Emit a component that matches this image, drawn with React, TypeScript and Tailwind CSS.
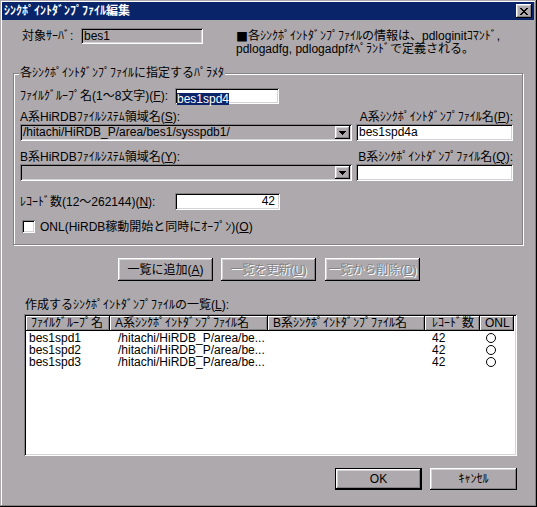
import React from "react";

const SUNKEN =
  "shadow-[inset_1px_1px_0_#848284,inset_-1px_-1px_0_#ffffff,inset_2px_2px_0_#000000,inset_-2px_-2px_0_#d6d3d6]";
const RAISED =
  "shadow-[inset_-1px_-1px_0_#000000,inset_1px_1px_0_#ffffff,inset_-2px_-2px_0_#848284,inset_2px_2px_0_#d6d3d6]";
const HEADER =
  "shadow-[inset_-1px_-1px_0_#000000,inset_1px_1px_0_#ffffff,inset_-2px_-2px_0_#848284]";

function Arrow() {
  return (
    <svg width="7" height="4" viewBox="0 0 7 4" shapeRendering="crispEdges">
      <path d="M0 0h7v1h-1v1h-1v1h-1v1h-1v-1h-1v-1h-1v-1h-1z" fill="#000" />
    </svg>
  );
}

function Combo({ value }: { value: string }) {
  return (
    <div className={`flex h-[17px] w-[332px] p-[2px] bg-[#ada9ad] ${SUNKEN}`}>
      <div className="flex-1 pl-[1px] leading-[13px] overflow-hidden whitespace-nowrap">{value}</div>
      <div className={`w-[15px] h-[13px] flex items-center justify-center bg-[#ada9ad] ${RAISED}`}>
        <Arrow />
      </div>
    </div>
  );
}

function Btn({ children, w, disabled }: { children: React.ReactNode; w: string; disabled?: boolean }) {
  return (
    <div
      className={`${w} h-[23px] flex items-center justify-center bg-[#ada9ad] ${RAISED} ${
        disabled ? "text-[#848284] [text-shadow:1px_1px_0_#ffffff]" : "text-black"
      }`}
    >
      {children}
    </div>
  );
}

const rows = ["bes1spd1", "bes1spd2", "bes1spd3"];

export default function App() {
  return (
    <div className="w-[537px] h-[507px] bg-[#ada9ad] flex flex-col text-[12px] text-black font-['Liberation_Sans','Noto_Sans_CJK_JP',sans-serif] shadow-[inset_-1px_-1px_0_#000000,inset_1px_1px_0_#ada9ad,inset_-2px_-2px_0_#848284,inset_2px_2px_0_#ffffff]">
      {/* title bar */}
      <div className="mt-[2px] ml-[2px] mr-[3px] h-[18px] bg-[#0a246a] flex items-center justify-between pl-[2px] pr-[2px]">
        <span className="text-white font-bold leading-[14px] whitespace-nowrap">ｼﾝｸﾎﾟｲﾝﾄﾀﾞﾝﾌﾟﾌｧｲﾙ編集</span>
        <div className={`w-[16px] h-[14px] bg-[#ada9ad] flex items-center justify-center ${RAISED}`}>
          <svg width="8" height="7" viewBox="0 0 8 7" shapeRendering="crispEdges">
            <path
              d="M0 0h2v1h1v1h2v-1h1v-1h2v1h-1v1h-1v1h-1v1h1v1h1v1h1v1h-2v-1h-1v-1h-2v1h-1v1h-2v-1h1v-1h1v-1h1v-1h-1v-1h-1v-1h-1z"
              fill="#000"
            />
          </svg>
        </div>
      </div>

      {/* target server row */}
      <div className="mt-[8px] ml-[22px] flex items-start">
        <div className="w-[59px] h-[16px] leading-[16px] whitespace-nowrap">対象ｻｰﾊﾞ:</div>
        <div className={`w-[122px] h-[16px] pl-[3px] leading-[16px] ${SUNKEN}`}>bes1</div>
        <div className="ml-[33px] mt-[2px] leading-[13px] whitespace-nowrap">
          <div className="h-[13px] flex items-center">
            <span className="font-['Noto_Sans_CJK_JP',sans-serif] leading-[13px]">■</span>
            <span>各ｼﾝｸﾎﾟｲﾝﾄﾀﾞﾝﾌﾟﾌｧｲﾙの情報は、pdloginitｺﾏﾝﾄﾞ,</span>
          </div>
          <div className="h-[13px]">pdlogadfg, pdlogadpfｵﾍﾟﾗﾝﾄﾞで定義される。</div>
        </div>
      </div>

      {/* group box */}
      <div className="relative mt-[17px] ml-[13px] w-[510px] h-[172px] border border-[#848284] shadow-[inset_1px_1px_0_#ffffff,1px_1px_0_#ffffff]">
        <div className="absolute left-[5px] top-[-8px] px-[1px] bg-[#ada9ad] leading-[14px] whitespace-nowrap">
          各ｼﾝｸﾎﾟｲﾝﾄﾀﾞﾝﾌﾟﾌｧｲﾙに指定するﾊﾟﾗﾒﾀ
        </div>
        <div className="pl-[6px] w-[499px] flex flex-col">
          {/* F row */}
          <div className="mt-[14px] flex items-center h-[16px]">
            <div className="w-[155px] whitespace-nowrap leading-[12px]">
              ﾌｧｲﾙｸﾞﾙｰﾌﾟ名(1～8文字)(<u>F</u>):
            </div>
            <div className={`w-[104px] h-[16px] bg-white pl-[2px] pt-[2px] ${SUNKEN}`}>
              <span className="bg-[#0a246a] text-white leading-[12px] inline-block h-[12px]">bes1spd4</span>
            </div>
          </div>
          {/* A labels */}
          <div className="mt-[7px] h-[12px] leading-[12px] flex justify-between whitespace-nowrap">
            <span>A系HiRDBﾌｧｲﾙｼｽﾃﾑ領域名(<u>S</u>):</span>
            <span>A系ｼﾝｸﾎﾟｲﾝﾄﾀﾞﾝﾌﾟﾌｧｲﾙ名(<u>P</u>):</span>
          </div>
          <div className="mt-[1px] flex h-[17px]">
            <Combo value="/hitachi/HiRDB_P/area/bes1/sysspdb1/" />
            <div className={`ml-[4px] w-[157px] h-[17px] bg-white pl-[3px] leading-[17px] ${SUNKEN}`}>bes1spd4a</div>
          </div>
          {/* B labels */}
          <div className="mt-[10px] h-[12px] leading-[12px] flex justify-between whitespace-nowrap">
            <span>B系HiRDBﾌｧｲﾙｼｽﾃﾑ領域名(<u>Y</u>):</span>
            <span>B系ｼﾝｸﾎﾟｲﾝﾄﾀﾞﾝﾌﾟﾌｧｲﾙ名(<u>Q</u>):</span>
          </div>
          <div className="mt-[1px] flex h-[17px]">
            <Combo value="" />
            <div className={`ml-[4px] w-[157px] h-[17px] bg-white ${SUNKEN}`}></div>
          </div>
          {/* N row */}
          <div className="mt-[12px] flex items-center h-[17px]">
            <div className="w-[155px] whitespace-nowrap leading-[12px]">
              ﾚｺｰﾄﾞ数(12～262144)(<u>N</u>):
            </div>
            <div className={`w-[105px] h-[17px] bg-white pr-[5px] text-right leading-[17px] ${SUNKEN}`}>42</div>
          </div>
          {/* checkbox */}
          <div className="mt-[10px] ml-[2px] flex items-center h-[13px]">
            <div className={`w-[13px] h-[13px] bg-white ${SUNKEN}`}></div>
            <span className="ml-[5px] leading-[12px] whitespace-nowrap">
              ONL(HiRDB稼動開始と同時にｵｰﾌﾟﾝ)(<u>O</u>)
            </span>
          </div>
        </div>
      </div>

      {/* list buttons */}
      <div className="mt-[13px] ml-[118px] flex h-[23px]">
        <Btn w="w-[95px]">
          一覧に追加(<u>A</u>)
        </Btn>
        <div className="ml-[8px]">
          <Btn w="w-[95px]" disabled>
            一覧を更新(<u>U</u>)
          </Btn>
        </div>
        <div className="ml-[9px]">
          <Btn w="w-[95px]" disabled>
            一覧から削除(<u>D</u>)
          </Btn>
        </div>
      </div>

      {/* list label */}
      <div className="mt-[18px] ml-[25px] h-[12px] leading-[12px] whitespace-nowrap">
        作成するｼﾝｸﾎﾟｲﾝﾄﾀﾞﾝﾌﾟﾌｧｲﾙの一覧(<u>L</u>):
      </div>

      {/* list view */}
      <div className={`mt-[3px] ml-[24px] w-[493px] h-[142px] bg-white p-[2px] ${SUNKEN}`}>
        <div className="flex h-[15px] leading-[15px] whitespace-nowrap">
          <div className={`w-[84px] pl-[5px] bg-[#ada9ad] ${HEADER}`}>ﾌｧｲﾙｸﾞﾙｰﾌﾟ名</div>
          <div className={`w-[158px] pl-[5px] bg-[#ada9ad] ${HEADER}`}>A系ｼﾝｸﾎﾟｲﾝﾄﾀﾞﾝﾌﾟﾌｧｲﾙ名</div>
          <div className={`w-[157px] pl-[5px] bg-[#ada9ad] ${HEADER}`}>B系ｼﾝｸﾎﾟｲﾝﾄﾀﾞﾝﾌﾟﾌｧｲﾙ名</div>
          <div className={`w-[55px] pl-[7px] bg-[#ada9ad] ${HEADER}`}>ﾚｺｰﾄﾞ数</div>
          <div className={`w-[34px] pl-[5px] bg-[#ada9ad] ${HEADER}`}>ONL</div>
        </div>
        <div className="mt-[1px] flex flex-col">
          {rows.map((r) => (
            <div key={r} className="flex h-[12px] leading-[12px] whitespace-nowrap">
              <div className="w-[84px] pl-[3px]">{r}</div>
              <div className="w-[158px] pl-[8px]">/hitachi/HiRDB_P/area/be...</div>
              <div className="w-[157px]"></div>
              <div className="w-[55px] pl-[7px]">42</div>
              <div className="w-[34px] pl-[6px] flex items-center">
                <div className="w-[10px] h-[10px] rounded-full border border-black"></div>
              </div>
            </div>
          ))}
        </div>
      </div>

      {/* OK / Cancel */}
      <div className="mt-[12px] mr-[20px] flex justify-end h-[22px]">
        <div className="w-[87px] h-[22px] border border-black">
          <div className={`w-full h-full flex items-center justify-center bg-[#ada9ad] ${RAISED}`}>OK</div>
        </div>
        <div className={`ml-[8px] w-[87px] h-[22px] flex items-center justify-center bg-[#ada9ad] ${RAISED}`}>
          ｷｬﾝｾﾙ
        </div>
      </div>
    </div>
  );
}
